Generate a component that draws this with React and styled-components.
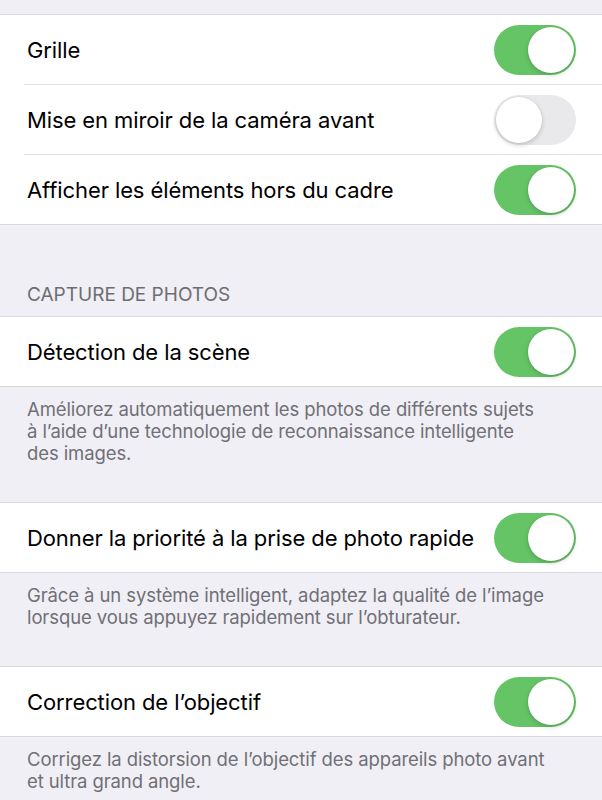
import React from "react";
import styled, { createGlobalStyle } from "styled-components";

const GlobalStyle = createGlobalStyle`
  body {
    margin: 0;
    background: #f0eff5;
    font-family: Inter, "Noto Sans", sans-serif;
    -webkit-font-smoothing: antialiased;
  }
`;

const Page = styled.div`
  padding-top: 14px;
  background: #f0eff5;
  min-height: 800px;
`;

const Group = styled.div`
  background: #ffffff;
  border-top: 1px solid #d9d8dd;
  border-bottom: 1px solid #d9d8dd;
`;

const Row = styled.div`
  display: flex;
  align-items: center;
  justify-content: space-between;
  height: 69px;
  padding: 0 26px 0 27px;

  & + & {
    border-top: 1px solid #e0dfe4;
    margin-left: 24px;
    padding-left: 3px;
  }
`;

const Label = styled.span`
  font-size: 22px;
  font-weight: 400;
  color: #000;
  letter-spacing: -0.1px;
`;

const Track = styled.div`
  width: 82px;
  height: 50px;
  border-radius: 25px;
  background: ${(p) => (p.$on ? "#65c466" : "#e9e9eb")};
  position: relative;
  flex: none;
`;

const Knob = styled.div`
  position: absolute;
  top: 2px;
  left: ${(p) => (p.$on ? "34px" : "2px")};
  width: 46px;
  height: 46px;
  border-radius: 50%;
  background: #fff;
  box-shadow: 0 2px 5px rgba(0, 0, 0, 0.18), 0 0 0 0.5px rgba(0, 0, 0, 0.06);
`;

const Header = styled.div`
  padding: 59px 27px 10px;
  font-size: 19px;
  line-height: 22px;
  color: #6d6d72;
`;

const Footer = styled.div`
  padding: 11px 27px 38px;
  font-size: 18.5px;
  line-height: 22px;
  color: #707075;
  letter-spacing: -0.1px;
`;

function Toggle({ on }) {
  return (
    <Track $on={on}>
      <Knob $on={on} />
    </Track>
  );
}

function Setting({ label, on = false }) {
  return (
    <Row>
      <Label>{label}</Label>
      <Toggle on={on} />
    </Row>
  );
}

export default function App() {
  return (
    <Page>
      <GlobalStyle />
      <Group>
        <Setting label="Grille" on />
        <Setting label="Mise en miroir de la caméra avant" />
        <Setting label="Afficher les éléments hors du cadre" on />
      </Group>
      <Header>CAPTURE DE PHOTOS</Header>
      <Group>
        <Setting label="Détection de la scène" on />
      </Group>
      <Footer>
        Améliorez automatiquement les photos de différents sujets
        <br />à l’aide d’une technologie de reconnaissance intelligente
        <br />
        des images.
      </Footer>
      <Group>
        <Setting label="Donner la priorité à la prise de photo rapide" on />
      </Group>
      <Footer>
        Grâce à un système intelligent, adaptez la qualité de l’image
        <br />
        lorsque vous appuyez rapidement sur l’obturateur.
      </Footer>
      <Group>
        <Setting label="Correction de l’objectif" on />
      </Group>
      <Footer>
        Corrigez la distorsion de l’objectif des appareils photo avant
        <br />
        et ultra grand angle.
      </Footer>
    </Page>
  );
}
